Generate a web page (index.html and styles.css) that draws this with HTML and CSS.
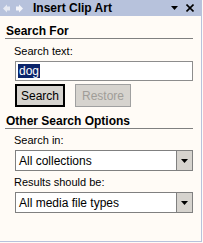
FILE: index.html
```html
<!DOCTYPE html>
<html>
<head>
<meta charset="utf-8">
<link rel="stylesheet" href="styles.css">
</head>
<body>
<div class="pane">
  <div class="titlebar">
    <div class="navs">
      <svg width="20" height="9" viewBox="0 0 20 9">
        <polygon points="0,4.5 4,0.5 4,2.5 7,2.5 7,6.5 4,6.5 4,8.5" fill="#e6e9f2"/>
        <polygon points="20,4.5 16,0.5 16,2.5 13,2.5 13,6.5 16,6.5 16,8.5" fill="#f4f5fa"/>
      </svg>
    </div>
    <div class="title">Insert Clip Art</div>
    <svg class="drop" width="7" height="4" viewBox="0 0 7 4"><polygon points="0,0 7,0 3.5,4" fill="#000"/></svg>
    <svg class="close" width="8" height="8" viewBox="0 0 8 8"><path d="M0.5 0.5 L7.5 7.5 M7.5 0.5 L0.5 7.5" stroke="#000" stroke-width="1.6"/></svg>
  </div>

  <div class="section">Search For</div>
  <div class="group">
    <div class="label">Search text:</div>
    <div class="input"><span class="sel">dog</span></div>
    <div class="buttons">
      <div class="btn default">Search</div>
      <div class="btn disabled">Restore</div>
    </div>
  </div>

  <div class="section second">Other Search Options</div>
  <div class="group">
    <div class="label">Search in:</div>
    <div class="select"><span class="val">All collections</span><span class="arrow"><svg width="7" height="4" viewBox="0 0 7 4"><polygon points="0,0 7,0 3.5,4" fill="#000"/></svg></span></div>
    <div class="label">Results should be:</div>
    <div class="select"><span class="val">All media file types</span><span class="arrow"><svg width="7" height="4" viewBox="0 0 7 4"><polygon points="0,0 7,0 3.5,4" fill="#000"/></svg></span></div>
  </div>
</div>
</body>
</html>
```
FILE: styles.css
```css
html, body {
  margin: 0;
  padding: 0;
  background: #fffbf6;
}
body {
  width: 203px;
  height: 243px;
  overflow: hidden;
  font-family: "Liberation Sans", Arial, sans-serif;
  font-size: 11px;
  color: #000;
}
.pane {
  width: 201px;
  height: 241px;
  border-right: 1px solid #b7c2dc;
  border-bottom: 1px solid #b7c2dc;
  background: #fffbf6;
}
.titlebar {
  height: 16px;
  background: #b7c2dc;
  display: flex;
  align-items: center;
}
.navs {
  width: 33px;
  padding-left: 3px;
  box-sizing: border-box;
  display: flex;
  align-items: center;
}
.title {
  font-weight: bold;
  font-size: 12px;
  flex: 1;
}
.drop {
  margin-right: 8px;
}
.close {
  margin-right: 7px;
}
.section {
  margin: 9px 8px 0 5px;
  padding-left: 1px;
  font-weight: bold;
  font-size: 12px;
  line-height: 12px;
  border-bottom: 1px solid #808080;
  padding-bottom: 1px;
}
.section.second {
  margin-top: 8px;
}
.group {
  padding: 0 8px 0 15px;
}
.label {
  margin-left: -1px;
  margin-top: 6px;
  line-height: 13px;
  height: 13px;
}
.group .select + .label,
.section.second + .group .label {
  margin-top: 5px;
}
.input {
  margin-top: 3px;
  height: 18px;
  border: 1px solid #8d8d8d;
  background: #fff;
  display: flex;
  align-items: center;
  padding-left: 2px;
}
.sel {
  background: #0a246a;
  color: #fff;
  font-size: 12px;
  line-height: 14px;
  padding: 0 1px;
}
.buttons {
  display: flex;
  gap: 10px;
  margin-top: 3px;
}
.btn {
  height: 23px;
  box-sizing: border-box;
  background: #d6d3ce;
  display: flex;
  align-items: center;
  justify-content: center;
  font-size: 12px;
}
.btn.default {
  width: 50px;
  border: 2px solid #000;
}
.btn.disabled {
  width: 56px;
  border: 1px solid #a0a0a0;
  color: #a09d98;
}
.select {
  margin-top: 3px;
  height: 21px;
  box-sizing: border-box;
  border: 1px solid #808080;
  background: #fff;
  display: flex;
}
.val {
  flex: 1;
  padding-left: 3px;
  display: flex;
  align-items: center;
  font-size: 12px;
}
.arrow {
  width: 15px;
  background: #d6d3ce;
  border-left: 1px solid #808080;
  display: flex;
  align-items: center;
  justify-content: center;
}
```
